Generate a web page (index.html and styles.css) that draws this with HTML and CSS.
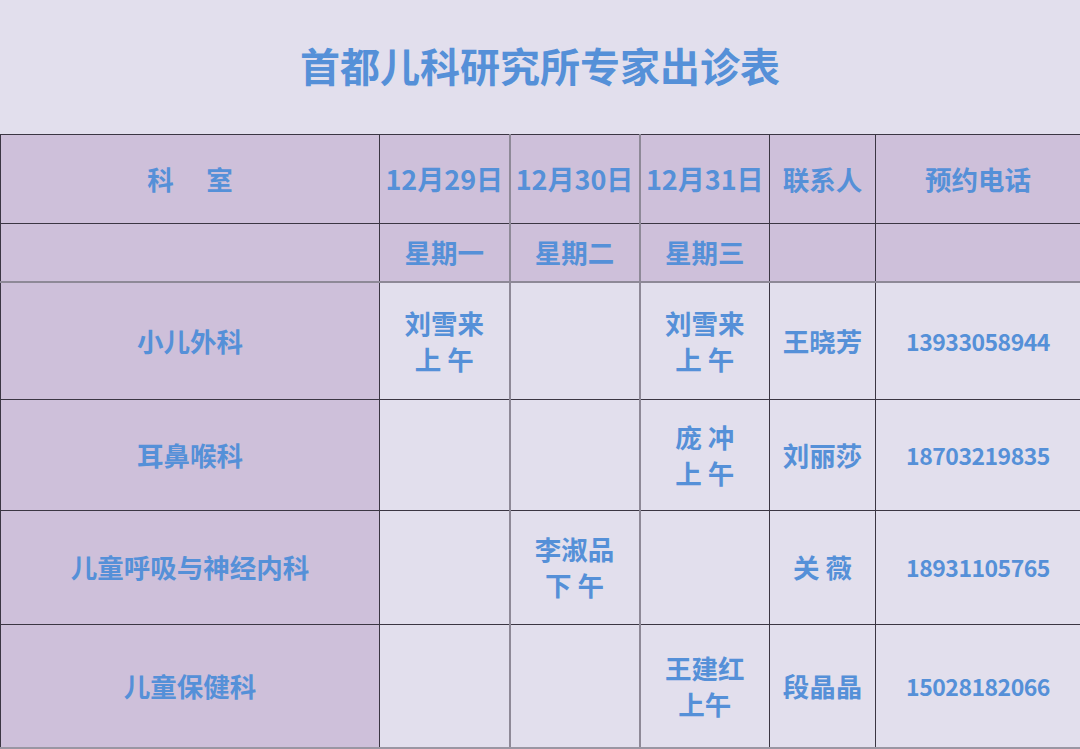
FILE: index.html
```html
<!DOCTYPE html>
<html lang="zh-CN">
<head>
<meta charset="utf-8">
<title>首都儿科研究所专家出诊表</title>
<link rel="stylesheet" href="styles.css">
</head>
<body>
<div class="page">
  <header class="title-bar">
    <h1 class="title">首都儿科研究所专家出诊表</h1>
  </header>
  <table class="schedule">
    <colgroup>
      <col class="c-dept">
      <col class="c-day">
      <col class="c-day">
      <col class="c-day">
      <col class="c-contact">
      <col class="c-phone">
    </colgroup>
    <tr class="r-h1">
      <td class="hd dept-hd">科　室</td>
      <td class="hd date">12月29日</td>
      <td class="hd date g-left">12月30日</td>
      <td class="hd date g-left">12月31日</td>
      <td class="hd">联系人</td>
      <td class="hd">预约电话</td>
    </tr>
    <tr class="r-h2">
      <td class="hd"></td>
      <td class="hd">星期一</td>
      <td class="hd g-left">星期二</td>
      <td class="hd g-left">星期三</td>
      <td class="hd"></td>
      <td class="hd"></td>
    </tr>
    <tr class="r-1 g-top">
      <td class="dept">小儿外科</td>
      <td class="cell">刘雪来<br>上 午</td>
      <td class="cell g-left"></td>
      <td class="cell g-left">刘雪来<br>上 午</td>
      <td class="cell">王晓芳</td>
      <td class="cell phone">13933058944</td>
    </tr>
    <tr class="r-2">
      <td class="dept">耳鼻喉科</td>
      <td class="cell"></td>
      <td class="cell g-left"></td>
      <td class="cell g-left">庞 冲<br>上 午</td>
      <td class="cell">刘丽莎</td>
      <td class="cell phone">18703219835</td>
    </tr>
    <tr class="r-3">
      <td class="dept">儿童呼吸与神经内科</td>
      <td class="cell"></td>
      <td class="cell g-left">李淑品<br>下 午</td>
      <td class="cell g-left"></td>
      <td class="cell">关 薇</td>
      <td class="cell phone">18931105765</td>
    </tr>
    <tr class="r-4 g-bottom">
      <td class="dept">儿童保健科</td>
      <td class="cell"></td>
      <td class="cell g-left"></td>
      <td class="cell g-left">王建红<br>上午</td>
      <td class="cell">段晶晶</td>
      <td class="cell phone">15028182066</td>
    </tr>
  </table>
</div>
</body>
</html>
```

FILE: styles.css
```css
html, body {
  margin: 0;
  padding: 0;
}
body {
  background: #e2dfed;
  font-family: "Noto Sans CJK SC", "Noto Sans", sans-serif;
  color: #5590d8;
  font-weight: 700;
}
.page {
  width: 1080px;
  height: 749px;
  display: flex;
  flex-direction: column;
}
.title-bar {
  height: 134px;
  display: flex;
  align-items: center;
  justify-content: center;
}
.title {
  margin: -3px 0 0;
  font-size: 40px;
  line-height: 1;
  font-weight: 700;
  color: #5590d8;
}
.schedule {
  width: 1080px;
  table-layout: fixed;
  border-collapse: collapse;
  border-top: 1px solid #8a8594;
}
.c-dept { width: 379px; }
.c-day { width: 130px; }
.c-contact { width: 106px; }
.c-phone { width: 205px; }
.schedule td {
  border: 1px solid #3b3643;
  padding: 0;
  text-align: center;
  vertical-align: middle;
  font-size: 26.5px;
  line-height: 36px;
  white-space: nowrap;
}
.schedule td.g-left {
  border-left: 2px solid #8e8997;
}
.g-top td {
  border-top: 2px solid #8e8997;
}
.g-bottom td {
  border-bottom: 2px solid #9a96a3;
}
.r-h1 { height: 89px; }
.r-h2 { height: 59px; }
.r-1 { height: 117px; }
.r-2 { height: 111px; }
.r-3 { height: 114px; }
.r-4 { height: 124px; }
.hd, .dept {
  background: #cec0da;
}
.cell {
  background: #e2dfed;
}
.r-h1 td {
  padding-top: 1px;
}
.r-h2 td {
  padding-top: 0;
}
.dept-hd {
  letter-spacing: 3px;
  text-indent: 3px;
}
.schedule td.date {
  font-size: 27px;
}
.schedule td.phone {
  font-size: 23px;
  letter-spacing: -0.5px;
}
```
